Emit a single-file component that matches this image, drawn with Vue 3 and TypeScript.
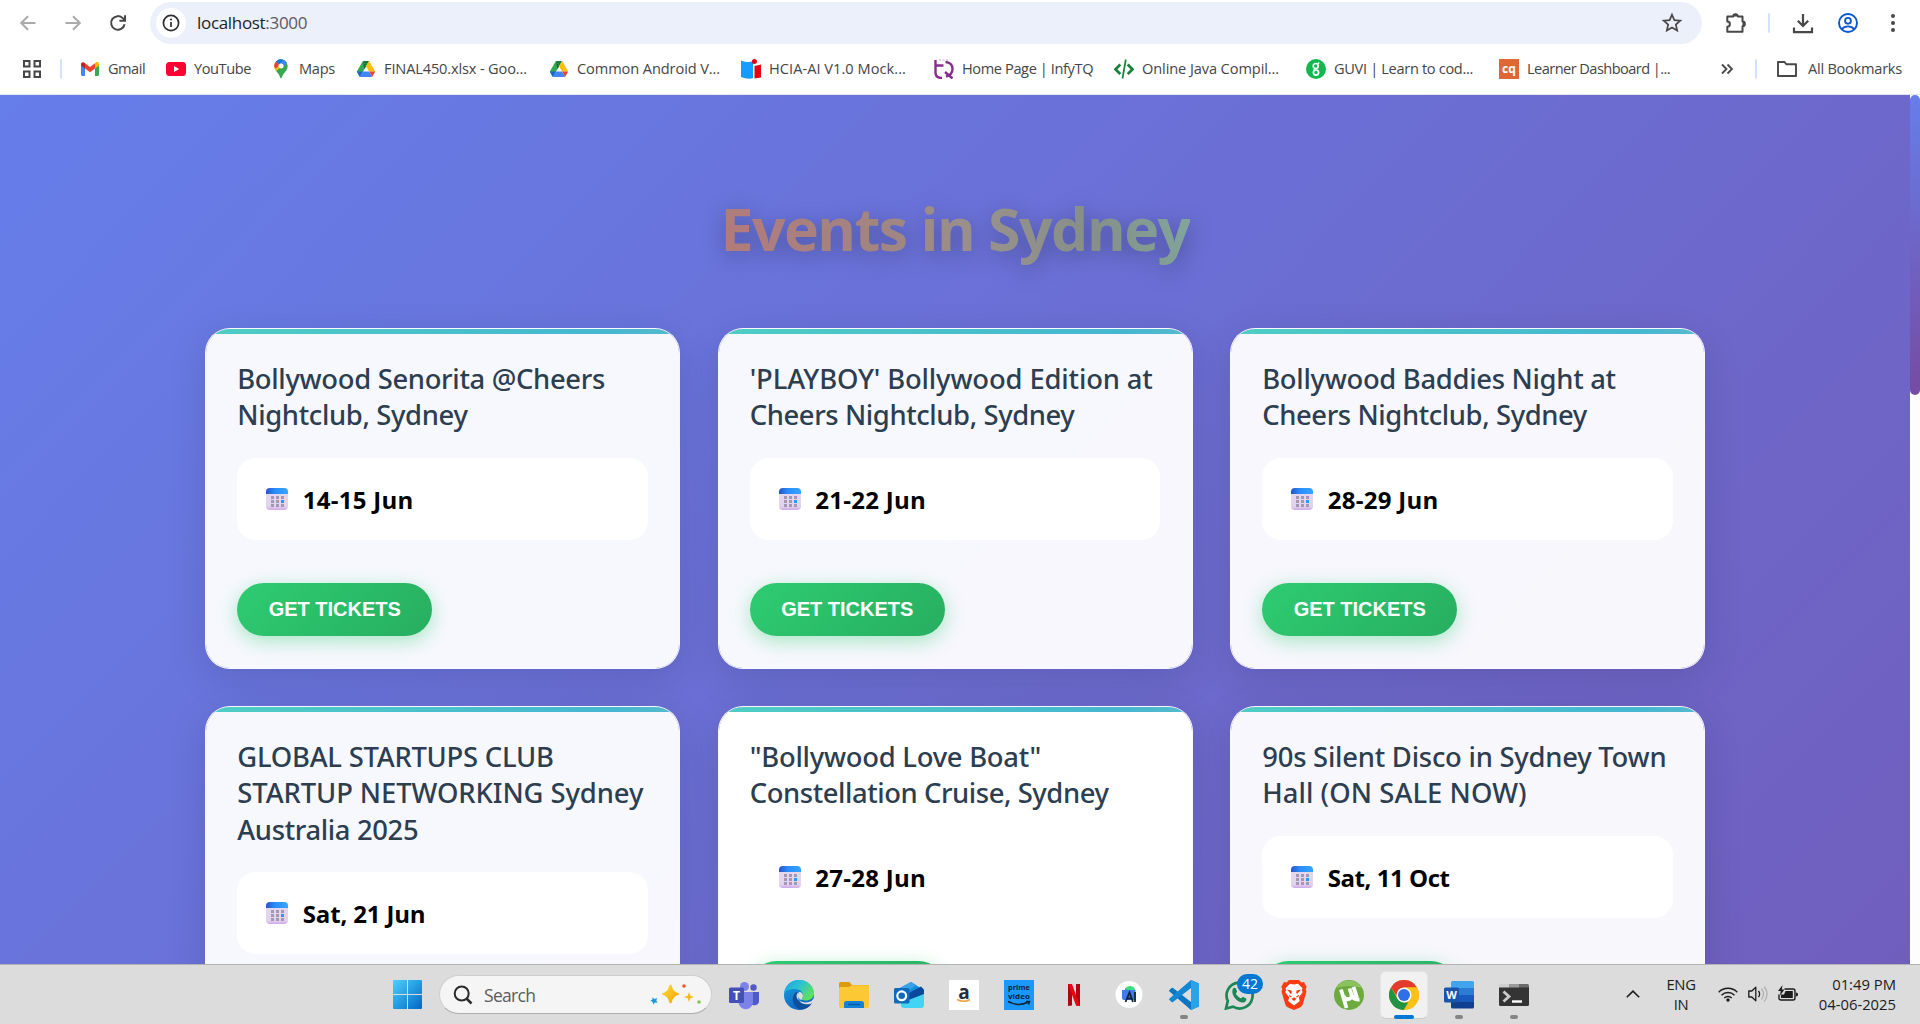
<script setup lang="ts">
interface Bookmark { icon: string; label: string; width: number; track: number }
interface TitleLine { text: string; track: number }
interface EventCard { title: TitleLine[]; date: string; dateTrack: number; hovered?: boolean }

const bookmarks: Bookmark[] = [
  { icon: 'gmail', label: 'Gmail', width: 86, track: -0.5 },
  { icon: 'youtube', label: 'YouTube', width: 105, track: -0.43 },
  { icon: 'maps', label: 'Maps', width: 85, track: -0.3 },
  { icon: 'drive', label: 'FINAL450.xlsx - Goo...', width: 193, track: -0.15 },
  { icon: 'drive', label: 'Common Android V...', width: 192, track: -0.1 },
  { icon: 'hcia', label: 'HCIA-AI V1.0 Mock...', width: 193, track: 0.04 },
  { icon: 'infy', label: 'Home Page | InfyTQ', width: 180, track: -0.4 },
  { icon: 'code', label: 'Online Java Compil...', width: 192, track: -0.1 },
  { icon: 'guvi', label: 'GUVI | Learn to cod...', width: 193, track: -0.33 },
  { icon: 'cq', label: 'Learner Dashboard |...', width: 172, track: -0.56 },
]

const events: EventCard[] = [
  {
    title: [{ text: 'Bollywood Senorita @Cheers', track: -0.32 }, { text: 'Nightclub, Sydney', track: -0.35 }],
    date: '14-15 Jun', dateTrack: 0.28,
  },
  {
    title: [{ text: "'PLAYBOY' Bollywood Edition at", track: -0.14 }, { text: 'Cheers Nightclub, Sydney', track: -0.4 }],
    date: '21-22 Jun', dateTrack: 0.28,
  },
  {
    title: [{ text: 'Bollywood Baddies Night at', track: -0.3 }, { text: 'Cheers Nightclub, Sydney', track: -0.4 }],
    date: '28-29 Jun', dateTrack: 0.28,
  },
  {
    title: [
      { text: 'GLOBAL STARTUPS CLUB', track: -0.24 },
      { text: 'STARTUP NETWORKING Sydney', track: -0.08 },
      { text: 'Australia 2025', track: -0.35 },
    ],
    date: 'Sat, 21 Jun', dateTrack: -0.15,
  },
  {
    title: [{ text: '"Bollywood Love Boat"', track: -0.25 }, { text: 'Constellation Cruise, Sydney', track: -0.43 }],
    date: '27-28 Jun', dateTrack: 0.28, hovered: true,
  },
  {
    title: [{ text: '90s Silent Disco in Sydney Town', track: -0.23 }, { text: 'Hall (ON SALE NOW)', track: 0.06 }],
    date: 'Sat, 11 Oct', dateTrack: -0.45,
  },
]

const apps: { name: string; state?: 'running' | 'active' }[] = [
  { name: 'teams' }, { name: 'edge' }, { name: 'folder' }, { name: 'outlook' }, { name: 'amazon' },
  { name: 'prime' }, { name: 'netflix' }, { name: 'android' }, { name: 'vscode', state: 'running' },
  { name: 'whatsapp' }, { name: 'brave' }, { name: 'utorrent' }, { name: 'chrome', state: 'active' },
  { name: 'word', state: 'running' }, { name: 'terminal', state: 'running' },
]
</script>

<template>
  <div class="screen">
    <header class="browser">
      <div class="toolbar">
        <svg class="nav" viewBox="0 0 20 20"><path d="M17.5 10H3.5M10 3.2 3.2 10l6.8 6.8" stroke="#ababab" /></svg>
        <svg class="nav" viewBox="0 0 20 20"><path d="M2.5 10h14M10 3.2l6.8 6.8-6.8 6.8" stroke="#ababab" /></svg>
        <svg class="nav" viewBox="0 0 20 20">
          <path d="M16.6 11.2A6.8 6.8 0 1 1 15 5.4L16.8 7.2" stroke="#474747" />
          <path d="M17 2.2v5.6h-5.6" stroke="#474747" />
        </svg>
        <div class="omnibox">
          <span class="site-info">
            <svg width="18" height="18" viewBox="0 0 18 18">
              <circle cx="9" cy="9" r="7.6" fill="none" stroke="#303030" stroke-width="1.7" />
              <path d="M9 8v5" stroke="#303030" stroke-width="1.7" /><circle cx="9" cy="5.5" r="1.1" fill="#303030" />
            </svg>
          </span>
          <span class="url">localhost<i>:3000</i></span>
          <svg class="star" width="22" height="22" viewBox="0 0 24 24">
            <path d="m12 3 2.6 5.9 6.4.6-4.8 4.3 1.4 6.3L12 16.8l-5.6 3.3 1.4-6.3L3 9.5l6.4-.6z" fill="none" stroke="#474747" stroke-width="1.9" />
          </svg>
        </div>
        <div class="actions">
          <svg class="a1" width="24" height="24" viewBox="0 0 24 24">
            <path d="M3.3 5.6h6a2.3 2.3 0 0 1 4.6 0h4.6v5a2.3 2.3 0 0 1 0 4.6v5.6H3.3v-5.1a2.6 2.6 0 0 0 0-5.2z" fill="none" stroke="#474747" stroke-width="2" stroke-linejoin="round" />
            <path d="M9 5.6a2.4 2.4 0 0 1 4.8 0zM18.500 10.500a2.400 2.400 0 0 1 0 4.800z" fill="#474747" />
          </svg>
          <span class="sep"></span>
          <svg class="a2" width="24" height="24" viewBox="0 0 24 24">
            <path d="M12 3v11.500M6.800 9.800l5.200 5.200 5.200-5.200M3 16.500v4.700h18v-4.700" fill="none" stroke="#474747" stroke-width="2.200" />
          </svg>
          <svg class="a3" width="22" height="22" viewBox="0 0 22 22" fill="none" stroke="#0b57d0" stroke-width="1.900">
            <circle cx="11" cy="11" r="9" /><circle cx="11" cy="8.800" r="2.900" /><path d="M4.800 17.300c2.900-3.900 9.500-3.900 12.400 0" />
          </svg>
          <svg class="a4" width="6" height="20" viewBox="0 0 6 20" fill="#474747">
            <circle cx="3" cy="3" r="2" /><circle cx="3" cy="10" r="2" /><circle cx="3" cy="17" r="2" />
          </svg>
        </div>
      </div>

      <div class="bookmarks">
        <svg class="grid-icon" width="20" height="20" viewBox="0 0 20 20" fill="none" stroke="#474747" stroke-width="2">
          <path d="M2 2h5.500v5.500H2zM12.500 2H18v5.500h-5.500zM2 12.500h5.500V18H2zM12.500 12.500H18V18h-5.500z" />
        </svg>
        <span class="bar-sep"></span>
        <div v-for="b in bookmarks" :key="b.label" class="bookmark" :style="{ width: b.width + 'px' }">
          <svg width="20" height="20" viewBox="0 0 20 20">
            <template v-if="b.icon === 'gmail'">
              <path d="M1 5v10.500c0 .8.600 1.500 1.400 1.500H5V8z" fill="#4285f4" />
              <path d="M19 5v10.500c0 .8-.6 1.500-1.400 1.500H15V8z" fill="#34a853" />
              <path d="M15 4.200V9.500l4-3V5c0-2-2.200-2.800-3.500-1.500z" fill="#fbbc04" />
              <path d="M5 9.500V4.200l5 3.800 5-3.800v5.300L10 13.300z" fill="#ea4335" />
              <path d="M1 5v1.500l4 3V4.200l-.5-.5C3.200 2.600 1 3.300 1 5z" fill="#c5221f" />
            </template>
            <template v-else-if="b.icon === 'youtube'">
              <rect y="3" width="20" height="14" rx="3.500" fill="#ff0033" /><path d="m8 7 5.200 3L8 13z" fill="#fff" />
            </template>
            <template v-else-if="b.icon === 'maps'">
              <path d="M10 19.500c-.8 0-1-2.500-2.700-4.700C5.500 12.500 3.300 10.400 3.300 7A6.700 6.700 0 0 1 16.700 7c0 3.400-2.200 5.500-4 7.800C11 17 10.800 19.500 10 19.500z" fill="#34a853" />
              <path d="M4.900 2.700 10 7 5.400 12.200C4.200 10.700 3.300 9.200 3.300 7c0-1.700.6-3.200 1.600-4.300z" fill="#fbbc04" />
              <path d="m4.900 2.700 3.500 3-3.200 3.700c-1.200-.5-1.900-1.300-1.900-2.400 0-1.700.6-3.200 1.600-4.300z" fill="#ea4335" />
              <path d="M12.200.7 8.400 5.400 4.900 2.700A6.700 6.700 0 0 1 12.200.7z" fill="#1a73e8" />
              <path d="m12.200.7-3 3.900 2.900 3.900 3.400-5A6.700 6.700 0 0 0 12.200.7z" fill="#4285f4" />
              <circle cx="10" cy="7" r="2.500" fill="#fff" />
            </template>
            <template v-else-if="b.icon === 'drive'">
              <path d="M6.900 2h6.200L10 7.300z" fill="#188038" /><path d="M6.900 2 .8 12.600l3.100 5.400L10 7.300z" fill="#34a853" />
              <path d="M6.900 2 10 7.300 8.400 10z" fill="#0f6b30" />
              <path d="M13.100 2 10 7.300l3.100 5.300h6.100z" fill="#fbbc04" />
              <path d="M.8 12.600h6.100L3.900 18z" fill="#1967d2" /><path d="M6.900 12.600h6.200l3 5.400H3.900z" fill="#4285f4" />
              <path d="M13.100 12.600h6.100L16.100 18z" fill="#ea4335" />
            </template>
            <template v-else-if="b.icon === 'hcia'">
              <path d="M0 1.500c5 2 9 2 12 .8v17C8 20.300 4 19.500 0 18z" fill="#149cff" />
              <path d="M13.500 7 20 5.600v13l-6.500.9z" fill="#e60012" /><circle cx="13.400" cy="2.600" r="2.500" fill="#e60012" />
            </template>
            <template v-else-if="b.icon === 'infy'">
              <path d="M1.500 1v12.500c0 3.500 2.500 5.500 6.500 5.500M1 6.500h8.500M11.500 3c9 .5 9.500 12 .5 14.500M11 13l7.500 6.500" fill="none" stroke="#8a2c8f" stroke-width="2.400" />
              <path d="M5 1h2M8.500 1h2M12 1h2" stroke="#c9a5cc" />
            </template>
            <template v-else-if="b.icon === 'code'">
              <path d="M6.300 5.500 1.500 10.300l4.800 4.800M13.700 5.500l4.800 4.800-4.800 4.800" fill="none" stroke="#188038" stroke-width="2.700" />
              <path d="M11.800.5 8.500 19.500" stroke="#188038" stroke-width="1.700" />
            </template>
            <template v-else-if="b.icon === 'guvi'">
              <circle cx="10" cy="10" r="10" fill="#10b84e" />
              <circle cx="9.700" cy="7" r="2.500" fill="none" stroke="#fff" stroke-width="1.700" />
              <circle cx="10" cy="13.600" r="2.600" fill="none" stroke="#fff" stroke-width="1.700" />
              <path d="m11.500 5 1.800-1.500M9 9.500 7.800 11" stroke="#fff" stroke-width="1.500" />
            </template>
            <template v-else>
              <rect width="20" height="20" fill="#df6734" />
              <text x="10" y="13.500" text-anchor="middle" font-size="12" font-weight="700" fill="#fff">cq</text>
            </template>
          </svg>
          <span :style="{ letterSpacing: b.track + 'px' }">{{ b.label }}</span>
        </div>
        <svg class="more" width="12" height="12" viewBox="0 0 12 12" fill="none" stroke="#474747" stroke-width="1.800"><path d="m1 1.500 4.500 4.500L1 10.500M6.500 1.500 11 6l-4.500 4.500" /></svg>
        <span class="bar-sep end"></span>
        <svg class="dir" width="20" height="16" viewBox="0 0 20 16" fill="none" stroke="#474747" stroke-width="1.900" stroke-linejoin="round"><path d="M1 1h6.500l2 2.300H19V15H1z" /></svg>
        <span class="all">All Bookmarks</span>
      </div>
    </header>

    <div class="viewport">
      <main class="page">
        <h1><span>Events in Sydney</span></h1>
        <section class="cards">
          <article v-for="e in events" :key="e.title[0].text" class="card" :class="{ hovered: e.hovered }">
            <h2><span v-for="l in e.title" :key="l.text" :style="{ letterSpacing: l.track + 'px' }">{{ l.text }}</span></h2>
            <div class="date">
              <svg width="22" height="22" viewBox="0 0 22 22">
                <defs>
                  <linearGradient id="calTop"><stop offset="0" stop-color="#2453d6" /><stop offset=".4" stop-color="#2a8cf8" /><stop offset="1" stop-color="#35a6ff" /></linearGradient>
                  <linearGradient id="calBody" x2="0" y2="1"><stop offset="0" stop-color="#e4d9ee" /><stop offset=".85" stop-color="#e2d3ec" /><stop offset="1" stop-color="#cfa6ea" /></linearGradient>
                </defs>
                <rect width="22" height="22" rx="4" fill="url(#calBody)" />
                <path d="M0 6V4a4 4 0 0 1 4-4h14a4 4 0 0 1 4 4v2z" fill="url(#calTop)" />
                <path d="M5 8h3v3H5zM10 8h3v3h-3zM15 8h3v3h-3zM5 12h3v3H5zM10 12h3v3h-3zM5 16h3v3H5zM10 16h3v3h-3zM15 16h3v3h-3z" fill="#a497b5" />
                <path d="M15 12h3v3h-3z" fill="#2c95f5" />
              </svg>
              <span :style="{ letterSpacing: e.dateTrack + 'px' }">{{ e.date }}</span>
            </div>
            <button>GET TICKETS</button>
          </article>
        </section>
      </main>
      <div class="scrollbar"><div class="thumb"></div></div>
    </div>

    <footer class="taskbar">
      <svg class="start" width="29" height="29" viewBox="0 0 29 29">
        <defs><linearGradient id="win" x2="1" y2="1"><stop offset="0" stop-color="#4cd0fb" /><stop offset="1" stop-color="#0067c8" /></linearGradient></defs>
        <path d="M1 0h13v14H0V1a1 1 0 0 1 1-1zM15 0h13a1 1 0 0 1 1 1v13H15zM0 15h14v14H1a1 1 0 0 1-1-1zM15 15h14v13a1 1 0 0 1-1 1H15z" fill="url(#win)" />
      </svg>
      <div class="search">
        <svg width="20" height="20" viewBox="0 0 20 20" fill="none" stroke="#2a2a2a" stroke-width="2"><circle cx="8.700" cy="8.500" r="7" /><path d="m13.500 13.500 5 5" stroke-width="2.500" /></svg>
        <span>Search</span>
        <svg class="sparkle" width="52" height="24" viewBox="0 0 52 24">
          <defs><linearGradient id="spark" x2="1" y2="1"><stop offset="0" stop-color="#ffd93b" /><stop offset="1" stop-color="#f5a300" /></linearGradient></defs>
          <path d="M20.500 1.500q1 0 1.500 2 1 5 6.500 6.800 1.500.7 0 1.400-5.500 1.800-6.500 6.800-.5 2-1.500 2t-1.500-2q-1-5-6.500-6.800-1.500-.7 0-1.400 5.500-1.800 6.500-6.800.5-2 1.500-2z" fill="url(#spark)" />
          <path d="m39 9 1.300 3.700L44 14l-3.700 1.300L39 19l-1.300-3.700L34 14l3.700-1.300z" fill="#f9b813" />
          <path d="m2.200 14.200 2.300 1.700 2.600-1-.8 2.500 1.300 2.300-2.600-.1L3.200 21.500l-.6-2.600L.3 17.500l2.200-1z" fill="#1a9be0" />
          <circle cx="34" cy="3" r="1.800" fill="#f0592b" /><circle cx="49" cy="19" r="1.800" fill="#8bc34a" />
        </svg>
      </div>

      <div class="apps">
        <div v-for="a in apps" :key="a.name" class="app" :class="a.state">
          <svg width="30" height="30" viewBox="0 0 30 30">
            <template v-if="a.name === 'teams'">
              <circle cx="24.500" cy="7.500" r="3.200" fill="#5059c9" /><path d="M20 12h10v9c0 5-7 5-7.500 3z" fill="#5059c9" />
              <circle cx="15.500" cy="6.500" r="4.500" fill="#7b83eb" /><path d="M9 12h15v9.500a7 7 0 0 1-14.500 1z" fill="#7b83eb" />
              <rect y="7.500" width="15" height="15.500" rx="1.500" fill="#464eb8" />
              <text x="7.500" y="19.500" text-anchor="middle" font-size="12" font-weight="700" fill="#fff">T</text>
            </template>
            <template v-else-if="a.name === 'edge'">
              <defs>
                <linearGradient id="edgeA" y2=".6"><stop offset="0" stop-color="#1ba0e8" /><stop offset=".5" stop-color="#2cc3d0" /><stop offset="1" stop-color="#62e05a" /></linearGradient>
                <linearGradient id="edgeB" x2=".4" y2="1"><stop offset="0" stop-color="#1aa4e6" /><stop offset="1" stop-color="#0b66c2" /></linearGradient>
              </defs>
              <circle cx="15" cy="15" r="15" fill="url(#edgeB)" />
              <path d="M0 13.500C1 5 7.500 0 15 0c9 0 15 6.500 15 13 0 5-4 7.500-8 7.500-3.500 0-5.500-1.500-4.200-3C20 15 19 9.500 11.500 9 6 8.700 1 10.500 0 13.500z" fill="url(#edgeA)" />
              <path d="M11.500 12.500C6 18 9.500 28 17.500 29.800c4.500-.5 8-3 10-6 .5-1-.3-1.400-1-1-5 2.500-11 1-13-3.500-1-2.500 0-5 1-6.500-1-.8-2-.8-3-.3z" fill="#0c4f9d" />
              <path d="M14 12.500c-2 2-2 5.500.5 7.500 3.500 3 9 3 13 1L30 18v4l-2.500 1.500c-4.500 2-11 .5-13-4-1-2.500-.5-5-.5-7z" fill="#dcdcdc" />
              <path d="M15 12c2.500 0 4.500 1.800 3.800 4.500-.5 1.500-1.500 2.300-.3 3.200L16 19.500c-2.500-2-2.500-5-1-7.500z" fill="#dcdcdc" />
            </template>
            <template v-else-if="a.name === 'folder'">
              <path d="M0 4c0-1.500.8-2 2-2h7.500c1 0 1.500.5 2 1.300L13 5h15c1.500 0 2 .8 2 2v6H0z" fill="#dc9c0d" />
              <path d="M0 8.500C0 7 1 7 2 7h8l3-1.700h15.500c1 0 1.500.7 1.500 1.700v19c0 1-.7 2-2 2H2c-1.300 0-2-.7-2-2z" fill="#fcc934" />
              <path d="M5 28v-4.500c0-1.500 1-2.500 2.500-2.500h15c1.500 0 2.500 1 2.500 2.500V28z" fill="#1381d5" /><path d="M9 24.500h12" stroke="#075ba4" stroke-width="1.500" />
            </template>
            <template v-else-if="a.name === 'outlook'">
              <path d="M4 9 17 2l12 7.500v12L10 27z" fill="#1490df" /><path d="m4 9 13-7 5 3L8 15z" fill="#3aa0e8" />
              <path d="m9 16 18-9.500 3 3v7L14 26z" fill="#0a4a9d" /><path d="m7 23 23-9v11c0 2-1 3-3 3H10c-2 0-3-1-3-3z" fill="#43d4f4" />
              <rect y="8" width="15.500" height="15.500" rx="1.500" fill="#0f6cbd" /><circle cx="7.700" cy="15.800" r="4.400" fill="none" stroke="#fff" stroke-width="2.200" />
            </template>
            <template v-else-if="a.name === 'amazon'">
              <rect width="30" height="30" fill="#fff" /><text x="15" y="18.500" text-anchor="middle" font-size="19" font-weight="700" fill="#232f3e">a</text>
              <path d="M8 19.500q7 3.500 13 0" fill="none" stroke="#f4a340" stroke-width="1.600" />
            </template>
            <template v-else-if="a.name === 'prime'">
              <rect width="30" height="30" fill="#1a98ff" />
              <text x="15" y="9.500" text-anchor="middle" font-size="7.500" font-weight="700" fill="#0c2433" textLength="22" lengthAdjust="spacingAndGlyphs">prime</text>
              <text x="15" y="18.500" text-anchor="middle" font-size="7.500" font-weight="700" fill="#0c2433" textLength="22" lengthAdjust="spacingAndGlyphs">video</text>
              <path d="M4 21.500q10 5.500 20 .8M22 21.500h3.500l-1 3" fill="none" stroke="#0c2433" stroke-width="1.500" />
            </template>
            <template v-else-if="a.name === 'netflix'">
              <path d="M9 4h4v21.500l-4 .5zM17 4h4v22l-4-.5z" fill="#b1060f" /><path d="M9 4h4l8 22-4-.5z" fill="#e50914" />
            </template>
            <template v-else-if="a.name === 'android'">
              <circle cx="15" cy="14.500" r="13.500" fill="#fff" /><path d="M11 10a5 4 0 0 1 10 0z" fill="#3ddc84" />
              <path d="M8 10h3v-2l2 2h8.500v10H10a2 2 0 0 1-2-2z" fill="#3f7bea" />
              <path d="m11.500 22 4-9.500 3.500 9.500M13 18.500h4.500M21 12v10" fill="none" stroke="#10243a" stroke-width="1.800" />
            </template>
            <template v-else-if="a.name === 'vscode'">
              <path d="M22 0 30 3.500v23L22 30 .5 11.500c-.7-.6-.6-1 0-1.500l2-1.900c.5-.4 1-.4 1.500 0l18 13.900z" fill="#0a76c4" />
              <path d="M22 0v8L4 21.900c-.5.4-1 .4-1.500 0l-2-1.900c-.6-.5-.7-.9 0-1.500z" fill="#1287d3" />
              <path d="m22 0 8 3.500v23L22 30z" fill="#27a4ec" />
            </template>
            <template v-else-if="a.name === 'whatsapp'">
              <path d="M2 28.500 3.800 21A13 13 0 1 1 9 26.700z" fill="#dcdcdc" stroke="#1a8754" stroke-width="2.700" />
              <path d="M9 8.500c1-1 2.500-.8 3 .2l1 2.500c.3 1-1 1.800-1.200 2.300 1 2.200 2.800 3.800 5 4.800.6 0 1.500-1.600 2.400-1.300l2.600 1.300c1.400 1 0 3.500-1.600 4.100C14 23.500 6 15 9 8.500z" fill="#1a8754" />
            </template>
            <template v-else-if="a.name === 'brave'">
              <path d="M10 0h10l2.500 2.500L25 2l2.700 5-1 2 .8 2.500-3.500 12c-.5 2-1.500 3-3 4L15 30l-6-2.500c-1.500-1-2.500-2-3-4L2.500 11.500 3.300 9l-1-2L5 2l2.500.5z" fill="#fb3b12" />
              <path d="m15 4.500 4-.8 4.500 4.500-.7 2.200 1 1.500-4 5.500 1 3.500-5.800 4.600-5.800-4.600 1-3.500-4-5.500 1-1.500-.7-2.200L11 3.700z" fill="#fff" />
              <path d="m8 9.500 4.500 1 .3 2.500-1 1zM22 9.500l-4.500 1-.3 2.500 1 1zM12.300 18.800l2.700-1.300 2.700 1.300L15 21z" fill="#fb3b12" />
              <path d="m10 15.500 2.500 1.500M20 15.500 17.500 17" stroke="#fb3b12" stroke-width="1.300" />
            </template>
            <template v-else-if="a.name === 'utorrent'">
              <circle cx="15" cy="15" r="15" fill="#6cab3e" /><path d="M2 8a15 15 0 0 1 26 0Q15 4 2 8z" fill="#8cc35f" />
              <path d="m8 8.500 2.500 8c1 3.500 6.500 3.500 7 .5L16 8l4-1.200c1 6 2 10.500 3.500 12.200l3 .5" fill="none" stroke="#fff" stroke-width="0" />
              <path d="m7 9.500 5.500 18.500M9.500 16c2 5 9 4 8-1.500L15.500 8.500M17.500 14.500c1 3.500 3 5.500 8 5M19.500 6.800l3.500 11" fill="none" stroke="#fff" stroke-width="3.800" />
            </template>
            <template v-else-if="a.name === 'chrome'">
              <circle cx="15" cy="15" r="15" fill="#fbc116" />
              <path d="M2 7.500A15 15 0 0 1 28 7.500H15L9 18z" fill="#e33b2e" />
              <path d="M2 7.500 8.500 18.800 15 22.500h6.500L15 30A15 15 0 0 1 2 7.500z" fill="#229342" />
              <path d="M15 7.500h13A15 15 0 0 1 14.700 30l6.800-11.300z" fill="#fbc116" />
              <circle cx="15" cy="15" r="7.500" fill="#fff" /><circle cx="15" cy="15" r="6" fill="#2f6fe8" />
            </template>
            <template v-else-if="a.name === 'word'">
              <path d="M7 2.500q0-1.500 1.500-1.500h20q1.500 0 1.500 1.500V8H7z" fill="#41a5ee" /><path d="M7 8h23v7H7z" fill="#2b7cd3" />
              <path d="M7 15h23v7H7z" fill="#185abd" /><path d="M7 22h23v5q0 1.500-1.500 1.500h-20Q7 28.500 7 27z" fill="#103f91" />
              <rect y="7.500" width="15" height="15" rx="1.500" fill="#1b54ad" />
              <text x="7.500" y="19" text-anchor="middle" font-size="11" font-weight="700" fill="#fff">W</text>
            </template>
            <template v-else>
              <path d="M1.500 4H10v4H0V5.500Q0 4 1.500 4z" fill="#cfcfcf" /><path d="M10 4h10v4H10z" fill="#9a9a9a" /><path d="M20 4h8.500Q30 4 30 5.500V8H20z" fill="#6b6b6b" />
              <path d="M0 7.500h30v17q0 1.500-1.500 1.500h-27Q0 26 0 24.500z" fill="#343434" />
              <path d="m4.500 11.500 5.500 5-5.500 5" fill="none" stroke="#ccc" stroke-width="2.800" /><path d="M13 21.500h10" stroke="#fff" stroke-width="2.400" />
            </template>
          </svg>
          <span v-if="a.name === 'whatsapp'" class="badge">42</span>
        </div>
      </div>

      <div class="tray">
        <svg class="chev" width="14" height="8" viewBox="0 0 14 8" fill="none" stroke="#1b1b1b" stroke-width="1.600"><path d="m.8 7.200 6.200-6 6.200 6" /></svg>
        <div class="lang"><span>ENG</span><span>IN</span></div>
        <svg class="wifi" width="20" height="16" viewBox="0 0 20 16" fill="none" stroke="#1b1b1b" stroke-width="1.400">
          <path d="M.7 6.200a13 13 0 0 1 18.600 0M3.500 9.200a9.200 9.200 0 0 1 13 0M6.300 12a5.300 5.300 0 0 1 7.400 0" /><circle cx="10" cy="14" r="1.700" fill="#1b1b1b" stroke="none" />
        </svg>
        <svg class="vol" width="20" height="18" viewBox="0 0 20 18" fill="none" stroke="#1b1b1b" stroke-width="1.300">
          <path d="M.8 6h3l4-3.800v13.600L3.800 12h-3zM10.500 5.800q2.200 3.200 0 6.400" stroke-linejoin="round" />
          <path d="M13.500 3.500q4 5.500 0 11M16.300 1.500q5.500 7.500 0 15" stroke="#b0b0b0" />
        </svg>
        <svg class="bat" width="20" height="17" viewBox="0 0 20 17">
          <path d="M6.500 4H15q2 0 2 2v7q0 2-2 2H3q-2 0-2-2V9.500" fill="none" stroke="#1b1b1b" stroke-width="1.400" />
          <path d="M7.500 6h7.300v7H3V9.500h3zM18 7.500q2 0 2 2t-2 2z" fill="#1b1b1b" /><path d="M4.500 0 0 6h2.700l-.7 4.500L6.500 4.500H3.800z" fill="#1b1b1b" />
        </svg>
        <div class="clock"><span>01:49 PM</span><span>04-06-2025</span></div>
      </div>
    </footer>
  </div>
</template>

<style>
body { background: #fff; overflow: hidden; }
</style>

<style scoped>
* { box-sizing: border-box; }
.screen {
  display: flex; flex-direction: column; width: 1920px; height: 1024px; overflow: hidden;
  font-family: "Open Sans", "Noto Sans", sans-serif;
}
svg { display: block; flex: none; }

.browser { height: 95px; flex: none; background: #fff; border-bottom: 1px solid #e3e6ee; }
.toolbar { display: flex; height: 46px; align-items: center; padding-left: 18px; }
.nav { width: 20px; height: 20px; margin-right: 25px; fill: none; stroke-width: 2; }
.nav + .nav + .nav { margin-right: 22px; }
.omnibox { display: flex; align-items: center; width: 1552px; height: 42px; padding: 0 19px 0 6px; border-radius: 21px; background: #ebf0fa; }
.site-info { display: grid; place-items: center; width: 30px; height: 30px; border-radius: 50%; background: #fff; }
.url { margin-left: 11px; font-size: 17px; letter-spacing: -0.32px; color: #1f1f1f; line-height: 24px; }
.url i { font-style: normal; color: #5a5a5a; }
.star { margin-left: auto; }
.actions { display: flex; align-items: center; }
.a1 { margin-left: 22px; }
.sep { width: 2px; height: 20px; margin: 0 21px 0 20px; background: #d3e3fd; border-radius: 1px; }
.a3 { margin-left: 22px; }
.a4 { margin-left: 31px; }

.bookmarks { display: flex; align-items: center; height: 46px; padding-left: 22px; color: #454545; font-size: 14.6px; line-height: 20px; white-space: nowrap; }
.bar-sep { width: 2px; height: 20px; margin: 0 18px 0 18px; border-radius: 1px; background: #d3e3fd; flex: none; }
.bookmark { display: flex; align-items: center; gap: 8px; flex: none; }
.bookmark span, .all { padding-bottom: 2px; }
.more { margin-left: 50px; }
.bar-sep.end { margin: 0 20px 0 22px; }
.all { margin-left: 11px; letter-spacing: -0.25px; }

.viewport { display: flex; height: 869px; flex: none; background: #fff; overflow: hidden; }
.page {
  width: 1910px; height: 2517px; flex: none; padding: 93px 205px 0;
  background: linear-gradient(135deg, #667eea 0%, #764ba2 100%);
}
h1 { margin: 0 0 59px; height: 81px; text-align: center; font-size: 59px; font-weight: 700; line-height: 81px; letter-spacing: -1.5px; }
h1 span {
  display: inline-block; color: transparent;
  background: linear-gradient(75deg, #b37a7b 0%, #a18581 35%, #98918c 55%, #868f88 78%, #80a89e 100%);
  background-clip: text; -webkit-background-clip: text;
  filter: drop-shadow(1px 5px 11px rgba(0, 0, 0, 0.28));
}
.cards { display: grid; grid-template-columns: repeat(3, 475px); gap: 37px 37.5px; align-items: stretch; }
.card {
  min-height: 341px; padding: 31.25px; border: 1px solid rgba(255, 255, 255, 0.96); border-radius: 25px;
  background: rgba(255, 255, 255, 0.95) padding-box; box-shadow: 0 10px 38px rgba(0, 0, 0, 0.12); overflow: hidden;
}
.card::before {
  content: ""; display: block; height: 5px; margin: -31.25px -31.25px 26.25px;
  background: linear-gradient(90deg, #4ecdc4, #45b7d1 85%, #56bacd);
}
.card.hovered { background: #fff padding-box; }
h2 { margin: 0 0 24.5px; padding-top: 0.5px; font: 500 27.4px/36.4px "Noto Sans", sans-serif; color: #2c3e50; }
h2 span { display: block; white-space: nowrap; }
.date {
  display: flex; align-items: center; height: 82px; padding: 0 29px; gap: 14.5px; border-radius: 18.75px;
  background: #fff; font-size: 24px; font-weight: 700; color: #000; line-height: 32px;
}
.date span { padding-top: 1px; }
button {
  display: block; width: 195px; height: 53px; margin-top: 43px; padding: 0 0 1px; border: 0; border-radius: 31px;
  background: linear-gradient(135deg, #2ecc71, #27ae60); box-shadow: 0 5px 19px rgba(46, 204, 113, 0.4);
  color: #fff; font: 700 20px "Liberation Sans", Arial, sans-serif;
}
.scrollbar { width: 10px; background: #fdfdfe; }
.thumb { height: 300px; border-radius: 5px; background: linear-gradient(180deg, #667eea, #764ba2); }

.taskbar { position: relative; display: flex; align-items: center; height: 60px; flex: none; border-top: 1px solid #b3b3b3; background: #dcdcdc; padding-left: 393px; }
.start { margin-right: 17px; }
.search { display: flex; align-items: center; width: 273px; height: 39px; margin-right: 4px; padding-left: 13px; border: 1px solid #cfcfcf; border-bottom-color: #adadad; border-radius: 20px; background: #f5f5f5; }
.search span { margin-left: 11px; font-size: 17.5px; letter-spacing: -0.7px; color: #5c5c5c; line-height: 24px; }
.sparkle { margin-left: auto; margin-right: 9px; }
.apps { display: flex; align-items: center; }
.app { position: relative; display: grid; place-items: center; width: 55px; height: 48px; }
.app svg { position: relative; }
.app.active::before { content: ""; position: absolute; inset: 0 3px 0 4px; border: 1px solid #e6e6e6; border-bottom-color: #cbcbcb; border-radius: 6px; background: #f1f1f1; }
.app.running::after, .app.active::after { content: ""; position: absolute; bottom: 0; left: 24px; width: 8px; height: 4px; border-radius: 2px; background: #858585; }
.app.active::after { left: 18px; width: 20px; background: #0078d4; }
.badge { position: absolute; left: 26px; top: 3px; width: 26px; height: 20px; border-radius: 10px; background: #0078d4; color: #fff; font-size: 14px; line-height: 20px; text-align: center; }
.tray { display: flex; align-items: center; margin-left: auto; padding: 0 24px 2px 0; font-size: 14.8px; line-height: 20px; color: #1b1b1b; height: 58px; }
.lang, .clock { display: flex; flex-direction: column; }
.lang { width: 40px; margin: 0 17px 0 21px; align-items: center; letter-spacing: -0.3px; }
.wifi { margin-right: 10px; }
.vol { margin-right: 10px; }
.clock { width: 80px; margin-left: 18px; align-items: flex-end; letter-spacing: 0; white-space: nowrap; }
</style>
